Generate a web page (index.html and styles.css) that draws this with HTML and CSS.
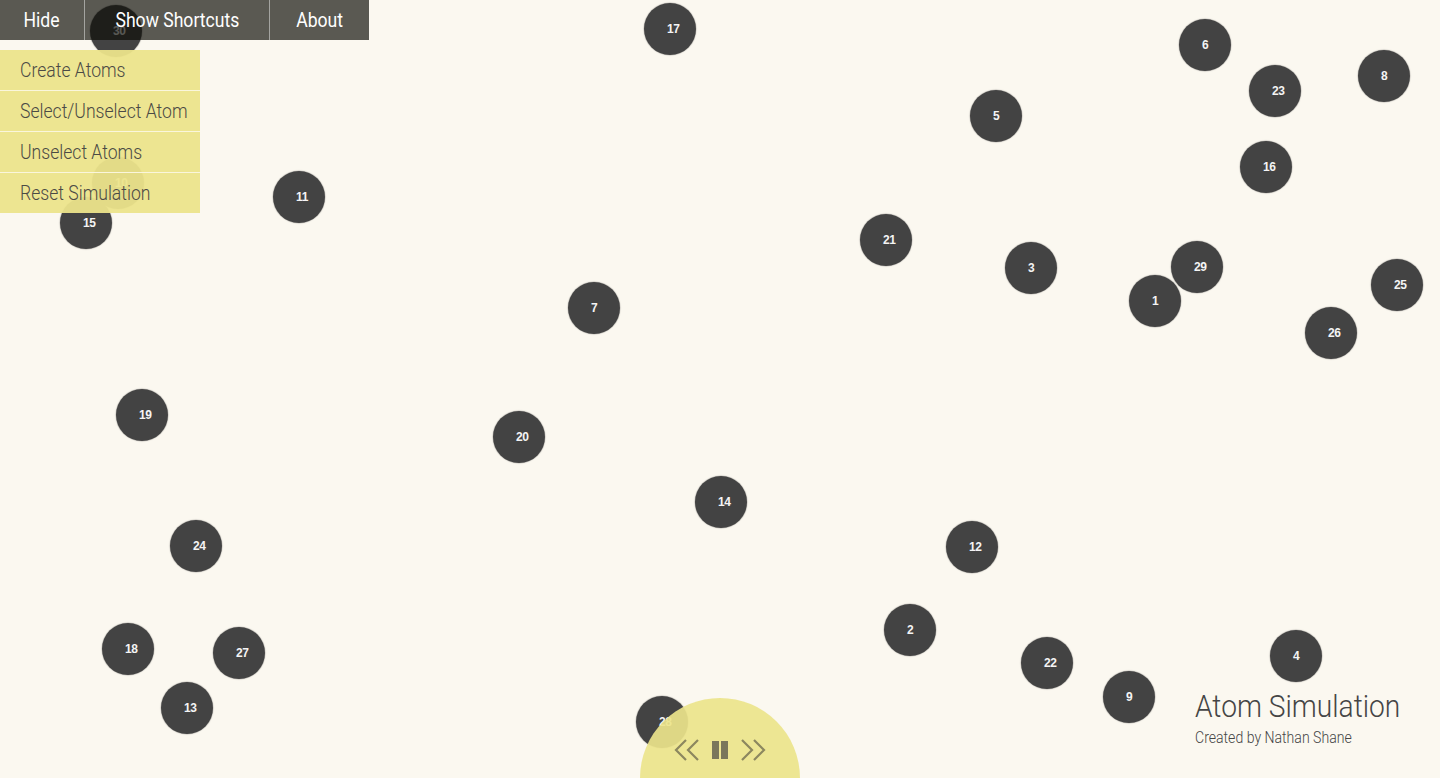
FILE: index.html
```html
<!DOCTYPE html>
<html lang="en">
<head>
<meta charset="utf-8">
<title>Atom Simulation</title>
<link rel="stylesheet" href="styles.css">
</head>
<body>
<div class="stage">
  <div class="canvas">
    <div class="atom" style="left:90px;top:5px">30</div>
    <div class="atom" style="left:644px;top:3px">17</div>
    <div class="atom" style="left:1179px;top:19px">6</div>
    <div class="atom" style="left:1249px;top:65px">23</div>
    <div class="atom" style="left:1358px;top:50px">8</div>
    <div class="atom" style="left:970px;top:90px">5</div>
    <div class="atom" style="left:1240px;top:141px">16</div>
    <div class="atom" style="left:273px;top:171px">11</div>
    <div class="atom" style="left:92px;top:157px">10</div>
    <div class="atom" style="left:60px;top:197px">15</div>
    <div class="atom" style="left:860px;top:214px">21</div>
    <div class="atom" style="left:1005px;top:242px">3</div>
    <div class="atom" style="left:1171px;top:241px">29</div>
    <div class="atom" style="left:1129px;top:275px">1</div>
    <div class="atom" style="left:1371px;top:259px">25</div>
    <div class="atom" style="left:1305px;top:307px">26</div>
    <div class="atom" style="left:568px;top:282px">7</div>
    <div class="atom" style="left:116px;top:389px">19</div>
    <div class="atom" style="left:493px;top:411px">20</div>
    <div class="atom" style="left:695px;top:476px">14</div>
    <div class="atom" style="left:946px;top:521px">12</div>
    <div class="atom" style="left:170px;top:520px">24</div>
    <div class="atom" style="left:884px;top:604px">2</div>
    <div class="atom" style="left:102px;top:623px">18</div>
    <div class="atom" style="left:213px;top:627px">27</div>
    <div class="atom" style="left:1021px;top:637px">22</div>
    <div class="atom" style="left:1270px;top:630px">4</div>
    <div class="atom" style="left:1103px;top:671px">9</div>
    <div class="atom" style="left:161px;top:682px">13</div>
    <div class="atom" style="left:636px;top:696px">28</div>
  </div>

  <nav class="topbar">
    <div class="nav-item nav-hide"><span class="cond">Hide</span></div>
    <div class="nav-item nav-shortcuts"><span class="cond">Show Shortcuts</span></div>
    <div class="nav-item nav-about"><span class="cond">About</span></div>
  </nav>

  <ul class="menu">
    <li class="menu-item"><span class="cond">Create Atoms</span></li>
    <li class="menu-item"><span class="cond">Select/Unselect Atom</span></li>
    <li class="menu-item"><span class="cond">Unselect Atoms</span></li>
    <li class="menu-item"><span class="cond">Reset Simulation</span></li>
  </ul>

  <div class="controls">
    <div class="control-row">
      <svg class="ctl-icon" width="26" height="22" viewBox="0 0 26 22"><polyline points="12,1 2,11 12,21" /><polyline points="24,1 14,11 24,21" /></svg>
      <div class="pause"><span class="bar"></span><span class="bar"></span></div>
      <svg class="ctl-icon" width="26" height="22" viewBox="0 0 26 22"><polyline points="2,1 12,11 2,21" /><polyline points="14,1 24,11 14,21" /></svg>
    </div>
  </div>

  <div class="credits">
    <h1 class="title"><span class="cond">Atom Simulation</span></h1>
    <p class="byline"><span class="cond">Created by Nathan Shane</span></p>
  </div>
</div>
</body>
</html>
```

FILE: styles.css
```css
html, body {
  margin: 0;
  padding: 0;
  width: 100%;
  height: 100%;
  overflow: hidden;
}

body {
  background: #fbf8f0;
  font-family: Roboto, "Liberation Sans", sans-serif;
  color: #444;
}

.stage {
  position: relative;
  width: 1440px;
  height: 778px;
  overflow: hidden;
}

.canvas {
  position: absolute;
  inset: 0;
}

.cond {
  display: inline-block;
  white-space: nowrap;
  transform: scaleX(0.88);
  transform-origin: left center;
}

.atom {
  position: absolute;
  width: 52px;
  height: 52px;
  box-sizing: border-box;
  border-radius: 50%;
  background: #434343;
  box-shadow: 0 0 1px 0.5px rgba(0, 0, 0, 0.25);
  color: #f4f4f4;
  font-family: "Liberation Sans", Arial, sans-serif;
  font-weight: bold;
  font-size: 12px;
  line-height: 52px;
  padding-left: 23px;
  letter-spacing: -0.3px;
}

.topbar {
  position: absolute;
  left: 0;
  top: 0;
  display: flex;
  height: 40px;
  background: rgba(14, 13, 8, 0.68);
}

.nav-item {
  display: flex;
  align-items: center;
  justify-content: center;
  color: #fff;
  font-weight: 400;
  font-size: 20px;
  height: 40px;
}

.nav-item .cond {
  transform-origin: center center;
}

.nav-item + .nav-item {
  border-left: 1px solid rgba(255, 255, 255, 0.45);
}

.nav-hide { width: 84px; }
.nav-shortcuts { width: 184px; }
.nav-about { width: 99px; }

.menu {
  position: absolute;
  left: 0;
  top: 50px;
  margin: 0;
  padding: 0;
  list-style: none;
  width: 200px;
}

.menu-item {
  height: 40px;
  display: flex;
  align-items: center;
  padding-left: 20px;
  background: rgba(236, 228, 139, 0.95);
  color: #4b4a45;
  font-weight: 300;
  font-size: 20px;
}

.menu-item + .menu-item {
  border-top: 1px solid #faf6dc;
}

.controls {
  position: absolute;
  left: 640px;
  top: 698px;
  width: 160px;
  height: 160px;
  border-radius: 50%;
  background: rgba(236, 228, 139, 0.92);
}

.control-row {
  display: flex;
  align-items: center;
  justify-content: center;
  gap: 12px;
  margin-top: 41px;
}

.ctl-icon {
  display: block;
}

.ctl-icon polyline {
  fill: none;
  stroke: #8c875f;
  stroke-width: 2.2;
}

.pause {
  display: flex;
  gap: 2px;
  height: 18px;
}

.bar {
  display: block;
  width: 7px;
  height: 18px;
  background: #7a775b;
}

.credits {
  position: absolute;
  left: 1195px;
  top: 687px;
  color: #454545;
}

.title {
  margin: 0;
  font-weight: 300;
  font-size: 32px;
  line-height: 38px;
}

.byline {
  margin: 3px 0 0;
  font-weight: 300;
  font-size: 16px;
  line-height: 20px;
}
```
